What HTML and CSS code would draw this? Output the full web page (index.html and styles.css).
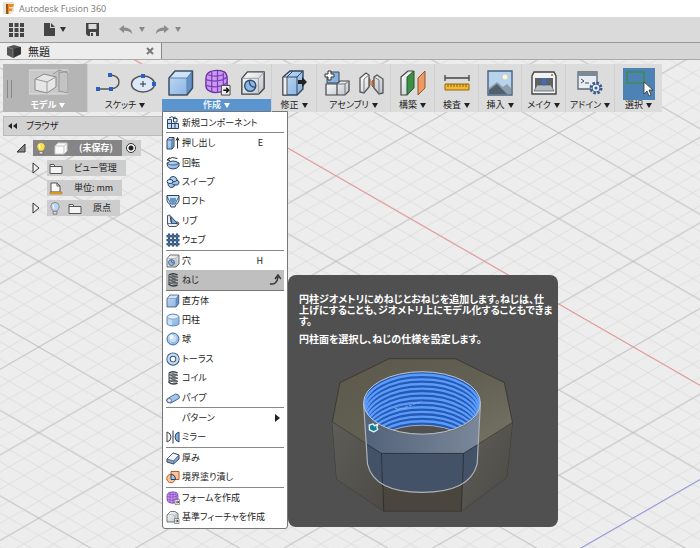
FILE: index.html
```html
<!DOCTYPE html>
<html lang="ja">
<head>
<meta charset="utf-8">
<meta name="viewport" content="width=device-width, initial-scale=1">
<title>Autodesk Fusion 360</title>
<link rel="stylesheet" href="styles.css">
</head>
<body>
<svg class="defs" aria-hidden="true">
  <defs>
    <linearGradient id="blue" x1="0" y1="0" x2="1" y2="1"><stop offset="0" stop-color="#c3dcf6"/><stop offset="1" stop-color="#84b0df"/></linearGradient>
    <linearGradient id="pale" x1="0" y1="0" x2="1" y2="1"><stop offset="0" stop-color="#fff"/><stop offset="1" stop-color="#bcc3cb"/></linearGradient>
  </defs>
  <symbol id="i-box" viewBox="0 0 28 28"><path d="M2 9 8 2h17.500v17L20 26H2z" fill="url(#blue)"/><path d="M2 9 8 2h17.500L20 9z" fill="#cfe3f8"/><path d="M20 9l5.500-7v17L20 26z" fill="#6592c8"/><path d="M2 9h18v17M20 9l5.500-7" fill="none" stroke="#5f82ab"/><path d="M2 9 8 2h17.500v17L20 26H2z" fill="none" stroke="#3d4f66" stroke-width="1.500" stroke-linejoin="round"/></symbol>
  <symbol id="i-form" viewBox="0 0 28 28"><path d="M6 3q7-3 15 0 3 2 3 7v7q0 4-4 6-8 3-14 0-4-2-4-6V10q0-5 4-7z" fill="#c99af0" stroke="#6b2ea3" stroke-width="1.400"/><path d="M2 11q9 3 18 0l4-3M2 17q9 3 18 0l4-3M8 3v21M14 2v23M20 4v19M4 6q8 3 16 0" fill="none" stroke="#7d3db8" stroke-width="1.300"/><path d="M18 17h9v10h-9z" fill="#eee" stroke="#444"/><path d="M20 22h5m-2-2.500 2.500 2.500-2.500 2.500" fill="none" stroke="#111" stroke-width="1.600"/></symbol>
  <symbol id="i-base" viewBox="0 0 28 28"><path d="M2 10 9 3q10-2 15 4v12l-5 5H2z" fill="url(#pale)" stroke="#555" stroke-width="1.600"/><path d="M2 10q10-4 16 2l6-5M18 12v12" fill="none" stroke="#888"/><path d="M17 17h9v10h-9z" fill="#eee" stroke="#444"/><path d="M19 22h5m-2-2.500 2.500 2.500-2.500 2.500" fill="none" stroke="#111" stroke-width="1.500"/></symbol>
  <symbol id="i-hole" viewBox="0 0 28 28"><path d="M2 9 8 2h18v18l-6 6H2z" fill="url(#pale)" stroke="#444" stroke-width="1.500" stroke-linejoin="round"/><path d="M2 9h18v17M20 9l6-7" fill="none" stroke="#999"/><circle cx="11" cy="17" r="6" fill="#8fb7e3" stroke="#2f4c70" stroke-width="1.500"/><path d="M10 11.500q0 7 6.500 7" fill="none" stroke="#2f4c70" stroke-width="1.300"/></symbol>
  <symbol id="i-newcomp" viewBox="0 0 28 28"><path d="M3 7h8v18H3zM11 15h14v10H11z" fill="#c3daf2" stroke="#2c4463" stroke-width="2"/><path d="M3 15h8M18 15v10M15 12V5h7v7z" fill="#f4f8fc" stroke="#2c4463" stroke-width="2"/><path d="M6 4q5-5 12 0m0-3v4h-4" fill="none" stroke="#2c4463" stroke-width="2"/></symbol>
  <symbol id="i-extrude" viewBox="0 0 28 28"><path d="M2 8l4-5h10v18l-4 5H2z" fill="url(#blue)" stroke="#2c4463" stroke-width="2"/><path d="M2 8h10v18M12 8l4-5" fill="none" stroke="#2c4463" stroke-width="1.500"/><path d="M23 25V4m-3 5 3-6 3 6" fill="none" stroke="#333" stroke-width="2"/></symbol>
  <symbol id="i-revolve" viewBox="0 0 28 28"><path d="M2 14q12-8 24 0v6q-4 6-12 6T3 20z" fill="url(#blue)" stroke="#2c4463" stroke-width="2"/><path d="M2 14q4 4 10 4h4q7 0 10-4" fill="none" stroke="#2c4463" stroke-width="1.500"/><path d="M3 7q9-7 20-2M7 3 2 8l6 1" fill="none" stroke="#333" stroke-width="2"/></symbol>
  <symbol id="i-sweep" viewBox="0 0 28 28"><path d="M7 10q0-7 7-7t8 7q5 2 4 7-2 4-8 3-2 6-9 5-6-3-5-8z" fill="url(#blue)" stroke="#2c4463" stroke-width="2"/><ellipse cx="8" cy="13" rx="6" ry="4" fill="#dcecfb" stroke="#2c4463" stroke-width="2"/><path d="M13 14q7 0 9-4M18 20q-5 0-6-3" fill="none" stroke="#2c4463" stroke-width="2"/></symbol>
  <symbol id="i-loft" viewBox="0 0 28 28"><path d="M2 3h24v10q0 4-6 8l-2 5H10l-2-5q-6-4-6-8z" fill="#d4e5f7" stroke="#2c4463" stroke-width="2"/><path d="M8 8h12v6l-4 5h-4l-4-5z" fill="#6796cb"/><path d="M2 5l8 15h8l8-15" fill="none" stroke="#2c4463" stroke-width="1.600"/></symbol>
  <symbol id="i-rib" viewBox="0 0 28 28"><path d="M3 3l5-1 2 14h14l2 4-6 5H6l-3-5z" fill="#e9eef3" stroke="#50565e" stroke-width="2"/><path d="M10 5l13 14H11z" fill="#7fabdc" stroke="#294a73" stroke-width="2"/><path d="M4 19h16l6 2" fill="none" stroke="#50565e" stroke-width="1.500"/></symbol>
  <symbol id="i-web" viewBox="0 0 28 28"><path d="M6 1v26M14 1v26M22 1v26M1 6h26M1 14h26M1 22h26" fill="none" stroke="#213f67" stroke-width="4.500"/><path d="M6 2v24M14 2v24M22 2v24M2 6h24M2 14h24M2 22h24" fill="none" stroke="#7fa5d2" stroke-width="1"/></symbol>
  <symbol id="i-coil" viewBox="0 0 28 28"><path d="M6 4q8-5 17 0M5 9q9-6 18 0M5 15q9-6 18 0M5 21q9-6 18 0" fill="none" stroke="#3b3f44" stroke-width="3"/><path d="M5 5q8 7 18 3M5 11q8 7 18 3M5 17q8 7 18 3M5 22q8 7 18 2" fill="none" stroke="#3b3f44" stroke-width="3"/><path d="M6 5q8 6 16 3M6 11q8 6 16 3M6 17q8 6 16 3" fill="none" stroke="#c4c8cc" stroke-width="1.300"/></symbol>
  <symbol id="i-cyl" viewBox="0 0 28 28"><path d="M2 7v15q3 4 12 4t12-4V7q-3-5-12-5T2 7z" fill="url(#blue)" stroke="#5c82ac" stroke-width="1.800"/><ellipse cx="14" cy="7.500" rx="11" ry="4.500" fill="#e5f0fb" stroke="#5c82ac"/><path d="M6 13v10M10 14v10" stroke="#d4e6f8" stroke-width="3"/></symbol>
  <symbol id="i-sphere" viewBox="0 0 28 28"><circle cx="14" cy="14" r="12" fill="url(#blue)" stroke="#446d9c" stroke-width="2"/><circle cx="14" cy="13" r="7" fill="#d8e9fb" opacity=".7"/><circle cx="11" cy="10" r="4" fill="#fff"/></symbol>
  <symbol id="i-torus" viewBox="0 0 28 28"><circle cx="14" cy="14" r="9" fill="#fff" stroke="#31527a" stroke-width="8.500"/><circle cx="14" cy="14" r="9" fill="none" stroke="#c3daf3" stroke-width="5"/></symbol>
  <symbol id="i-pipe" viewBox="0 0 28 28"><path d="M5 14 19 6q7 0 8 6 0 3-3 4L10 24q-8 1-9-5 0-3 4-5z" fill="url(#blue)" stroke="#4a6484" stroke-width="2"/><ellipse cx="6.500" cy="19" rx="4.500" ry="4" fill="#e2eefa" stroke="#4a6484" stroke-width="1.500"/></symbol>
  <symbol id="i-mirror" viewBox="0 0 28 28"><path d="M2 4q8 2 8 10t-8 10z" fill="#f2f2f2" stroke="#444" stroke-width="2"/><path d="M26 4q-8 2-8 10t8 10z" fill="#86b0df" stroke="#294a73" stroke-width="2"/><path d="M14 1v26" stroke="#333" stroke-width="2"/></symbol>
  <symbol id="i-thick" viewBox="0 0 28 28"><path d="M2 16 14 4l12 4v8L15 26 2 22z" fill="#82abdb" stroke="#39475a" stroke-width="2" stroke-linejoin="round"/><path d="M2 16 14 4l12 4-11 12z" fill="#f2f4f6" stroke="#39475a" stroke-width="1.500"/><path d="M15 21v5" stroke="#39475a"/></symbol>
  <symbol id="i-bound" viewBox="0 0 28 28"><path d="M10 3h16v16H10z" fill="#f8c5a0" stroke="#b85a25" stroke-width="2"/><circle cx="10" cy="17" r="8.500" fill="#f8c5a0" stroke="#b85a25" stroke-width="2"/><path d="M10 9q8 0 9 10h-9z" fill="#a9c9eb" stroke="#2c4463" stroke-width="2"/></symbol>
  <symbol id="i-folder" viewBox="0 0 14 12"><path d="M1 11V2h4l1 2h7v7zM1 4h5" fill="#f4f4f4" stroke="#555"/></symbol>
  <symbol id="i-bulb" viewBox="0 0 12 16"><path d="M4 11Q1.500 8 1.500 5.500 2 1.500 6 1.500t4.500 4Q10.500 8 8 11z" stroke="#777" stroke-width=".8"/><path d="M4 11h4v3H4z" fill="#ddd" stroke="#666" stroke-width=".8"/><path d="M4 3.500 5 8" stroke="#fff"/></symbol>
  <symbol id="i-tri" viewBox="0 0 8 12"><path d="M1 1v10l6-5z" fill="#eee" stroke="#333"/></symbol>
</svg>

<header class="titlebar">
  <svg width="12" height="13" viewBox="0 0 12 13"><path d="M0 0h11v9l-3 3H0z" fill="#e5e1dc"/><path d="M3 2h8l-1 3H6v1.500h3.500L9 9H6v3H3z" fill="#f08a1d"/><path d="M3 2h2v10H3z" fill="#a55211"/></svg>
  <h1>Autodesk Fusion 360</h1>
</header>

<nav class="quickbar" aria-label="クイック アクセス">
  <button aria-label="データ パネル"><svg width="15" height="14" viewBox="0 0 15 14" fill="#444"><path d="M0 0h4v4H0zM5.500 0h4v4h-4zM11 0h4v4h-4zM0 5h4v4H0zM5.500 5h4v4h-4zM11 5h4v4h-4zM0 10h4v4H0zM5.500 10h4v4h-4zM11 10h4v4h-4z"/></svg></button>
  <button aria-label="ファイル"><svg width="11" height="13" viewBox="0 0 11 13"><path d="M0 0h6v5h5v8H0zM7 0l4 4H7z" fill="#444"/></svg><i class="caret"></i></button>
  <button aria-label="保存"><svg width="13" height="13" viewBox="0 0 13 13"><path d="M0 0h13v13H2l-2-2z" fill="#444"/><path d="M2.500 1h8v5h-8zM4 9h6v4H4z" fill="#dcdcdc"/><path d="M5 10h2v3H5z" fill="#444"/></svg></button>
  <div class="history">
    <button aria-label="元に戻す"><svg width="14" height="10" viewBox="0 0 14 10"><path d="M0 4l5-4v2.500q8 0 8.500 7Q11 5.500 5 5.800V8z" fill="#8b8b8b"/></svg><i class="caret"></i></button>
    <button aria-label="やり直し"><svg width="14" height="10" viewBox="0 0 14 10"><path d="M14 4 9 0v2.500q-8 0-8.500 7Q3 5.500 9 5.800V8z" fill="#8b8b8b"/></svg><i class="caret"></i></button>
  </div>
</nav>

<div class="tabs">
  <div class="tab">
    <svg width="14" height="13" viewBox="0 0 14 13"><path d="M0 2 7 0l7 2v7l-8 4-6-3z" fill="#555"/><path d="M6 4l8-2v7l-8 4z" fill="#353535"/><path d="M0 2l6 2v9" fill="none" stroke="#999" stroke-width=".6"/></svg>
    <span>無題</span>
    <button aria-label="閉じる"><svg width="8" height="8" viewBox="0 0 8 8"><path d="M1 1l6 6M7 1 1 7" stroke="#777" stroke-width="2"/></svg></button>
  </div>
</div>

<main class="canvas">
  <svg class="grid" aria-hidden="true">
    <defs>
      <pattern id="minor" width="29.720" height="17.120" patternUnits="userSpaceOnUse" patternTransform="translate(410.300 73)"><path d="M0 0 29.720 17.120M0 17.120 29.720 0" stroke="#d9d9d9" stroke-width=".8"/></pattern>
      <pattern id="major" width="148.600" height="85.600" patternUnits="userSpaceOnUse" patternTransform="translate(410.300 73)"><path d="M0 0 148.600 85.600M0 85.600 148.600 0" stroke="#b8b8b8" stroke-width=".8"/></pattern>
    </defs>
    <rect width="100%" height="100%" fill="url(#minor)"/>
    <rect width="100%" height="100%" fill="url(#major)"/>
    <path d="M100 -20 1200 613" stroke="#f29494" stroke-width="1"/>
    <path d="M400 592 800 362" stroke="#9494e8" stroke-width="1"/>
  </svg>

  <ul class="ribbon">
    <li class="group model"><button>
      <span class="art"><svg width="40" height="26" viewBox="0 0 40 26"><path d="M0 1h39v24H0z" fill="#c9c9c9" stroke="#dedede"/><path d="M24 5l6-4 9 3v20l-9-2M30 1v22M30 4l9-2" fill="#c3c3c3" stroke="#999"/><path d="M6 10l9-5 12 3v10l-9 6-12-3z" fill="#e6e6e6" stroke="#888"/><path d="M6 10l12 3 9-5M18 13v11" fill="none" stroke="#999"/></svg></span>
      <span class="lbl">モデル<i class="caret"></i></span></button></li>
    <li class="group"><button>
      <span class="art"><svg width="26" height="20" viewBox="0 0 26 20"><path d="M3 16h13q8-1 8-7t-8-7" fill="none" stroke="#555" stroke-width="1.400"/><path d="M1 14h4v4H1zM14 14h4v4h-4zM13 0h4v4h-4z" fill="#2c5fc0"/></svg><svg width="26" height="20" viewBox="0 0 26 20"><ellipse cx="13" cy="11" rx="11.500" ry="8" fill="#dde9f6" stroke="#555" stroke-width="1.400"/><path d="M13 8v6M10 11h6" stroke="#333"/><path d="M11 1h4v4h-4zM22 9h4v4h-4z" fill="#2c5fc0"/></svg></span>
      <span class="lbl">スケッチ<i class="caret"></i></span></button></li>
    <li class="group create"><button aria-expanded="true">
      <span class="art"><svg width="28" height="28"><use href="#i-box"/></svg><svg width="27" height="27"><use href="#i-form"/></svg><svg width="26" height="26"><use href="#i-hole"/></svg></span>
      <span class="lbl">作成<i class="caret"></i></span></button>

      <div class="flyout">
        <ul class="menu">
          <li><button><svg><use href="#i-newcomp"/></svg>新規コンポーネント</button></li>
          <li class="first"><button><svg><use href="#i-extrude"/></svg>押し出し<kbd>E</kbd></button></li>
          <li><button><svg><use href="#i-revolve"/></svg>回転</button></li>
          <li><button><svg><use href="#i-sweep"/></svg>スイープ</button></li>
          <li><button><svg><use href="#i-loft"/></svg>ロフト</button></li>
          <li><button><svg><use href="#i-rib"/></svg>リブ</button></li>
          <li><button><svg><use href="#i-web"/></svg>ウェブ</button></li>
          <li class="first"><button><svg><use href="#i-hole"/></svg>穴<kbd>H</kbd></button></li>
          <li><button class="active"><svg><use href="#i-coil"/></svg>ねじ<svg class="end" viewBox="0 0 12 12"><path d="M1 10q7 1 8-7M6 5l3-4 3 4" fill="none" stroke="#333" stroke-width="1.500"/></svg></button></li>
          <li><button><svg><use href="#i-box"/></svg>直方体</button></li>
          <li><button><svg><use href="#i-cyl"/></svg>円柱</button></li>
          <li><button><svg><use href="#i-sphere"/></svg>球</button></li>
          <li><button><svg><use href="#i-torus"/></svg>トーラス</button></li>
          <li><button><svg><use href="#i-coil"/></svg>コイル</button></li>
          <li><button><svg><use href="#i-pipe"/></svg>パイプ</button></li>
          <li class="first"><button><svg></svg>パターン<svg class="end" viewBox="0 0 12 12"><path d="M6 2v8l5-4z" fill="#222"/></svg></button></li>
          <li><button><svg><use href="#i-mirror"/></svg>ミラー</button></li>
          <li class="first"><button><svg><use href="#i-thick"/></svg>厚み</button></li>
          <li><button><svg><use href="#i-bound"/></svg>境界塗り潰し</button></li>
          <li class="first"><button><svg><use href="#i-form"/></svg>フォームを作成</button></li>
          <li><button><svg><use href="#i-base"/></svg>基準フィーチャを作成</button></li>
        </ul>
        <aside class="tip" role="tooltip">
          <p>円柱ジオメトリにめねじとおねじを追加します。ねじは、仕<br>上げにすることも、ジオメトリ上にモデル化することもできま<br>す。</p>
          <p>円柱面を選択し、ねじの仕様を設定します。</p>
          <svg class="nut" viewBox="135 50 560 475" role="img" aria-label="ねじ穴のある八角ナット">
            <defs>
              <linearGradient id="top" x1="0" y1="0" x2="1" y2="1"><stop offset="0" stop-color="#5c584c"/><stop offset=".5" stop-color="#625f53"/><stop offset="1" stop-color="#777468"/></linearGradient>
              <linearGradient id="side" x1="0" y1="0" x2="1" y2="1"><stop offset="0" stop-color="#5d5d59"/><stop offset="1" stop-color="#4d4a43"/></linearGradient>
              <linearGradient id="glass" x1="0" y1="0" x2="1" y2="0"><stop offset="0" stop-color="#53637a"/><stop offset="1" stop-color="#7b879a"/></linearGradient>
              <clipPath id="mouth"><ellipse cx="412" cy="191" rx="176" ry="94"/></clipPath>
            </defs>
            <path d="M313 58h200l147 72 24 120-17 165-137 102H297L155 420l-13-172 23-118z" fill="#4a463d" stroke="#34322d" stroke-width="2"/>
            <path d="M142 248l148 95 7 174L155 420z" fill="url(#side)"/>
            <path d="M684 250l-147 93-7 174 137-102z" fill="url(#side)"/>
            <path d="M313 58h200l147 72 24 120-147 93H290L142 248l23-118z" fill="url(#top)" stroke="#38362f" stroke-width="2"/>
            <path d="M290 343l7 174M537 343l-7 174" stroke="#2c2a26" stroke-width="2.500"/>
            <path d="M236 191l12 184q20 85 164 85t166-85l10-184q-15 94-176 94T236 191z" fill="url(#glass)"/>
            <path d="M245 315l45 28h247l45-28-4 60q-22 85-166 85t-164-85z" fill="#445267"/>
            <path d="M290 343h247M290 343l3 100M537 343l-3 95M245 315l45 28M537 343l45-28" stroke="#252b33" stroke-width="2.500" fill="none"/>
            <g clip-path="url(#mouth)">
              <path d="M230 90h365v200H230z" fill="#2459b4"/>
              <g fill="none" stroke="#5b9cfb" stroke-width="7">
                <ellipse cx="412" cy="202" rx="174" ry="96"/><ellipse cx="412" cy="216" rx="173" ry="96"/><ellipse cx="412" cy="230" rx="172" ry="96"/><ellipse cx="412" cy="244" rx="171" ry="96"/><ellipse cx="412" cy="258" rx="170" ry="96"/><ellipse cx="412" cy="272" rx="170" ry="96"/><ellipse cx="412" cy="286" rx="170" ry="96"/><ellipse cx="412" cy="300" rx="170" ry="96"/><ellipse cx="412" cy="314" rx="170" ry="96"/><ellipse cx="412" cy="328" rx="170" ry="96"/><ellipse cx="412" cy="342" rx="170" ry="96"/>
              </g>
              <ellipse cx="412" cy="354" rx="170" ry="96" fill="#505050" stroke="#d5dce4" stroke-width="2"/>
            </g>
            <path d="M330 207h40m-34 6 75-27" stroke="#86b0ee" stroke-width="3" stroke-dasharray="9 4"/>
            <ellipse cx="412" cy="191" rx="176" ry="94" fill="none" stroke="#c1c7cf" stroke-width="3"/>
            <path d="M236 191l12 184q20 85 164 85t166-85l10-184" fill="none" stroke="#aeb3ba" stroke-width="3.500"/>
            <path d="M253 258l12-4 4 6 10-5-3 9 3 7-12 7-13-6z" fill="#117f9a" stroke="#e3f6fa" stroke-width="4" stroke-linejoin="round"/>
          </svg>
        </aside>
      </div>
    </li>
    <li class="group"><button>
      <span class="art"><svg width="27" height="28" viewBox="0 0 27 28"><path d="M2 8l7-6h13v18l-6 6H2z" fill="url(#blue)" stroke="#31465f" stroke-width="1.400"/><path d="M2 8h4v18H2z" fill="#eee" stroke="#555"/><path d="M6 8l6-6M16 8v18M6 8h10l6-6" fill="none" stroke="#31465f"/><path d="M17 11h4V8l5 5-5 5v-3h-4z" fill="#222"/></svg></span>
      <span class="lbl">修正<i class="caret"></i></span></button></li>
    <li class="group"><button>
      <span class="art"><svg width="26" height="26" viewBox="0 0 26 26"><path d="M3 6l4-4h8v11H3z" fill="#8bb3e0" stroke="#31465f"/><path d="M2 14h11v11H2zM13 14l3-3h9v10l-4 4h-8z" fill="url(#pale)" stroke="#444" stroke-width="1.200"/><path d="M13 14h8v11m0-11 4-3" fill="none" stroke="#777"/><path d="M4 1h3v3h3v3H7v3H4V7H1V4h3z" fill="#fff" stroke="#333"/></svg><svg width="25" height="24" viewBox="0 0 25 24"><path d="M8 6l3 2v6l-3 4M16 8l-3 2v5l3 3" fill="#e88b4c" stroke="#9b4b1d"/><path d="M1 7l6-5 3 2v12l-5 6-4-1zM15 6l3-2 6 4v14l-4 1-5-6z" fill="url(#pale)" stroke="#555" stroke-width="1.300"/><path d="M5 8v14M5 8l5-4M20 9v14M20 9l-5-3" stroke="#777" fill="none"/></svg></span>
      <span class="lbl">アセンブリ<i class="caret"></i></span></button></li>
    <li class="group"><button>
      <span class="art"><svg width="27" height="27" viewBox="0 0 27 27"><path d="M2 8l7-6h5v17l-6 7H2z" fill="url(#pale)" stroke="#444" stroke-width="1.200"/><path d="M8 8l7-6v17l-7 7z" fill="#3d9145" stroke="#29592d"/><path d="M19 9l7-7v17l-7 7z" fill="#ef9a62" stroke="#8e5430"/></svg></span>
      <span class="lbl">構築<i class="caret"></i></span></button></li>
    <li class="group"><button>
      <span class="art"><svg width="26" height="18" viewBox="0 0 26 18"><path d="M1 1v6M25 1v6M1 4h24" stroke="#444" stroke-width="1.300"/><path d="M1 10h24v6H1z" fill="#f2b933" stroke="#916814"/><path d="M4 10v3M7 10v3M10 10v3M13 10v3M16 10v3M19 10v3M22 10v3" stroke="#73510d" stroke-width=".8"/></svg></span>
      <span class="lbl">検査<i class="caret"></i></span></button></li>
    <li class="group"><button>
      <span class="art"><svg width="26" height="26" viewBox="0 0 26 26"><path d="M1 1h24v24H1z" fill="#b7d2ea" stroke="#48627f" stroke-width="1.400"/><circle cx="18" cy="7" r="2.500" fill="#fff5c5"/><path d="M2 18l8-6 6 5 4-3 4 4v6H2z" fill="#8e9daa"/><path d="M2 24v-4l8-6 10 10z" fill="#52606e"/></svg></span>
      <span class="lbl">挿入<i class="caret"></i></span></button></li>
    <li class="group"><button>
      <span class="art"><svg width="26" height="24" viewBox="0 0 26 24"><path d="M3 1h20l2 4v18H1V5z" fill="#f3f3f3" stroke="#444" stroke-width="1.400"/><path d="M4 7h18v10H4z" fill="#5d6268"/><path d="M6 14h14l3 6H3z" fill="#b9bec4" stroke="#555" stroke-width=".7"/><path d="M11 7h4v5l-2 3-2-3z" fill="#3970c0"/><path d="M20 4h2" stroke="#333"/></svg></span>
      <span class="lbl">メイク<i class="caret"></i></span></button></li>
    <li class="group"><button>
      <span class="art"><svg width="26" height="24" viewBox="0 0 26 24"><path d="M1 1h19v17H1z" fill="#e7edf3" stroke="#5c6772" stroke-width="1.300"/><path d="M1 1h19v4H1z" fill="#7d8995"/><path d="M4 8l3 2-3 2M8 12h4" fill="none" stroke="#3c4c60"/><circle cx="19" cy="17" r="5" fill="#f1f5fa" stroke="#385d8d" stroke-width="3" stroke-dasharray="2.400 1.500"/><circle cx="19" cy="17" r="4" fill="#e5edf7" stroke="#385d8d"/><circle cx="19" cy="17" r="1.500" fill="#385d8d"/></svg></span>
      <span class="lbl">アドイン<i class="caret"></i></span></button></li>
    <li class="group select"><button>
      <span class="art"><svg width="32" height="32" viewBox="0 0 32 32"><path d="M0 0h32v32H0z" fill="#4d82b4"/><path d="M4 4h17v11H4z" fill="none" stroke="#3f8d4c" stroke-width="1.600"/><path d="M21 14v12l3-3 2 5 2-1-2-5h4z" fill="#fff" stroke="#333" stroke-width=".8"/></svg></span>
      <span class="lbl">選択<i class="caret"></i></span></button></li>
  </ul>

  <section class="browser">
    <h2><svg width="9" height="6" viewBox="0 0 9 6"><path d="M4 0v6L0 3zM9 0v6L5 3z" fill="#222"/></svg>ブラウザ</h2>
    <ul class="tree">
      <li class="root"><svg class="twist" viewBox="0 0 10 10"><path d="M9 1v8H1z" fill="#888" stroke="#333"/></svg><span class="node dark"><svg class="bulb on"><use href="#i-bulb"/></svg><svg class="ic" viewBox="0 0 14 13"><path d="M1 4l3-3h9v8l-3 3H1z" fill="#fafafa" stroke="#ccc"/><path d="M1 4h9v8M10 4l3-3" fill="none" stroke="#c5c5c5"/></svg><b>(未保存)</b></span><label class="radio"><input type="radio" name="component" checked aria-label="コンポーネントをアクティブ化"></label></li>
      <li><svg class="twist"><use href="#i-tri"/></svg><span class="node"><svg class="ic"><use href="#i-folder"/></svg>ビュー管理</span></li>
      <li><svg class="twist"></svg><span class="node"><svg class="ic" viewBox="0 0 14 13"><path d="M2 10V1h6l3 3v6z" fill="#fafafa" stroke="#555"/><path d="M8 1v3h3" fill="none" stroke="#555"/><path d="M1 10h12v2H1z" fill="#eca32d" stroke="#b8750e" stroke-width=".6"/></svg>単位: mm</span></li>
      <li><svg class="twist"><use href="#i-tri"/></svg><span class="node"><svg class="bulb"><use href="#i-bulb"/></svg><svg class="ic"><use href="#i-folder"/></svg>原点</span></li>
    </ul>
  </section>
</main>
</body>
</html>
```
FILE: styles.css
```css
* { box-sizing: border-box; }

body {
  margin: 0;
  min-height: 100vh;
  display: flex;
  flex-direction: column;
  font: 9px/12px "Noto Sans CJK JP", sans-serif;
  font-feature-settings: "palt";
  color: #222;
  background: #ededed;
}

ul { list-style: none; margin: 0; padding: 0; }
h1, h2, p { margin: 0; font-size: inherit; font-weight: inherit; }
button { border: 0; padding: 0; background: none; font: inherit; font-feature-settings: inherit; color: inherit; }
svg { display: block; flex: none; }
.defs { position: absolute; width: 0; height: 0; }

.caret {
  border: 3px solid transparent;
  border-top: 5px solid currentColor;
  border-bottom: 0;
}

.titlebar {
  display: flex;
  align-items: center;
  gap: 4px;
  height: 17px;
  padding-left: 3px;
  background: #fff;
}
.titlebar h1 { font: 9px/16px "Open Sans", sans-serif; color: #777; }

.quickbar {
  display: flex;
  align-items: center;
  gap: 20px;
  height: 25px;
  padding-left: 9px;
  background: #dadada;
}
.quickbar button { display: flex; align-items: center; gap: 5px; color: #333; }
.history { display: flex; gap: 10px; }
.history button { gap: 6px; color: #888; }

.tabs { height: 18px; border-top: 1px solid #999; border-bottom: 1px solid #aaa; background: #d6d6d6; }
.tab {
  display: flex;
  align-items: center;
  gap: 7px;
  width: 162px;
  height: 16px;
  padding: 0 7px;
  border-right: 1px solid #888;
  background: #ededed;
  font-size: 11px;
}
.tab button { margin-left: auto; }

.canvas { position: relative; flex: 1; padding: 4px 0 0 3px; }
.grid { position: absolute; inset: 0; width: 100%; height: 100%; }

.ribbon {
  position: relative;
  z-index: 1;
  display: grid;
  grid-template-columns: 84px 75px 109px 45px 74px 44px 44px 43px 44px 49px 48px;
  width: max-content;
  background: #dcdcdc;
}
.group { position: relative; border-left: 1px solid #cfcfcf; }
.group > button { display: flex; flex-direction: column; width: 100%; height: 48px; }
.art { display: flex; align-items: center; justify-content: center; gap: 9px; height: 35px; width: 100%; padding-top: 2px; }
.lbl { display: flex; align-items: center; justify-content: center; gap: 3px; width: 100%; height: 12px; white-space: nowrap; }
.model { background: #b5b5b5; border-left: 0; }
.model::before {
  content: "";
  position: absolute;
  left: 4px;
  top: 16px;
  width: 3px;
  height: 18px;
  border: solid #888;
  border-width: 0 1px;
}
.model .art { padding: 0 0 0 8px; }
.model .lbl { color: #fff; font-weight: bold; padding-left: 6px; }
.create { border-left: 0; }
.create .lbl { color: #fff; background: #5b95cf; font-weight: 500; }
.select .art { padding: 4px 0 0; }

.flyout { position: absolute; left: 0; top: calc(100% - 1px); display: flex; align-items: flex-start; }
.menu {
  display: flex;
  flex-direction: column;
  width: 126px;
  min-height: 418px;
  padding: 1px 3px;
  border: 1px solid #777;
  border-radius: 0 0 3px 3px;
  background: #fff;
}
.menu li { flex: 1; display: flex; }
.menu .first { border-top: 1px solid #888; }
.menu button { flex: 1; display: flex; align-items: center; gap: 2px; white-space: nowrap; }
.menu svg { width: 14px; height: 14px; }
.menu .end { width: 12px; height: 12px; margin: 0 3px 0 auto; }
.menu kbd { font: inherit; margin: 0 21px 0 auto; }
.menu .active { background: #bfbfbf; border-bottom: 1px solid #777; }

.tip {
  width: 270px;
  margin-top: 164px;
  padding: 18px 11px 13px;
  border-radius: 8px;
  background: #505050;
  color: #fff;
  font-size: 10px;
  font-weight: bold;
  line-height: 11px;
  white-space: nowrap;
}
.tip p + p { margin-top: 7px; }
.nut { width: 186px; height: 158px; margin: 12px 0 0 31px; }

.browser { position: relative; margin-top: 4px; width: 160px; }
.browser h2 {
  display: flex;
  align-items: center;
  gap: 9px;
  height: 20px;
  padding-left: 4px;
  border: 1px solid #bbb;
  background: #d2d2d2;
}
.tree { display: grid; gap: 4px; padding: 4px 0 0 29px; justify-items: start; }
.tree li { display: flex; align-items: center; gap: 7px; height: 16px; }
.tree .root { margin-left: -16px; gap: 0; }
.root .twist { width: 10px; margin-right: 7px; }
.twist { width: 8px; height: 12px; }
.node { display: flex; align-items: center; gap: 11px; height: 16px; padding: 0 9px 0 2px; background: #cdcdcd; white-space: nowrap; }
.node.dark { background: #858585; color: #fff; }
.bulb { width: 12px; height: 15px; fill: #bcd4f3; margin-right: -4px; }
.bulb.on { fill: #ffe04d; }
.ic { width: 14px; height: 13px; }
.radio { display: flex; align-items: center; height: 16px; padding: 0 5px 0 4px; background: #cdcdcd; }
.radio input {
  appearance: none;
  width: 10px;
  height: 10px;
  margin: 0;
  border: 1px solid #333;
  border-radius: 50%;
  background: radial-gradient(circle, #222 2px, #fff 3px);
}
```
